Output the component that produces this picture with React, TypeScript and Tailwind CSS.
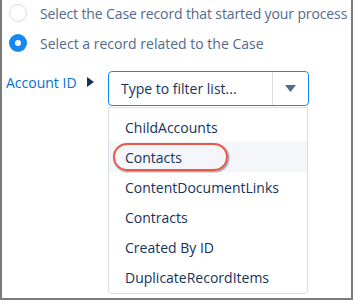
import React from 'react';

const items = ['ChildAccounts', 'Contacts', 'ContentDocumentLinks', 'Contracts', 'Created By ID', 'DuplicateRecordItems'];

const App: React.FC = () => {
  return (
    <div
      className="w-[353px] h-[300px] bg-white border-x-2 border-b-2 border-[#7b7b7b] overflow-hidden"
      style={{ fontFamily: '"Open Sans", "Noto Sans", sans-serif' }}
    >
      <div className="flex items-center h-[26px] pl-[7px] text-[14px] text-[#54698d] whitespace-nowrap">
        <span className="shrink-0 w-[18px] h-[18px] rounded-full border border-[#d8dde6] bg-white" />
        <span className="ml-[13px] tracking-[-0.12px]">Select the Case record that started your process</span>
      </div>
      <div className="flex items-center h-[34px] pl-[7px] text-[14px] text-[#54698d] whitespace-nowrap">
        <span className="shrink-0 w-[18px] h-[18px] rounded-full bg-[#1589ee] flex items-center justify-center">
          <span className="w-[6px] h-[6px] rounded-full bg-white" />
        </span>
        <span className="ml-[13px]">Select a record related to the Case</span>
      </div>
      <div className="flex items-start pt-[11px]">
        <div className="flex items-center h-[22px] pl-[4px] w-[106px] text-[14px] text-[#0070d2]">
          <span>Account ID</span>
          <svg width="7" height="10" viewBox="0 0 7 10" className="ml-[10px]">
            <path d="M0 0 L7 5 L0 10 Z" fill="#16325c" />
          </svg>
        </div>
        <div className="flex flex-col w-[201px]">
          <div className="flex items-center h-[35px] border border-[#1589ee] rounded-[4px] text-[14px] text-[#16325c]">
            <span className="flex-1 pl-[12px]">Type to filter list...</span>
            <div className="w-px h-full bg-[#d8dde6]" />
            <div className="w-[35px] flex items-center justify-center">
              <svg width="11" height="7" viewBox="0 0 11 7">
                <path d="M0 0 L11 0 L5.5 7 Z" fill="#54698d" />
              </svg>
            </div>
          </div>
          <div className="mt-[1px] w-[200px] border border-[#d8dde6] rounded-b-[4px] pt-[4px] pb-[1px] text-[14px] text-[#16325c]">
            {items.map((item) => (
              <div
                key={item}
                className={
                  item === 'Contacts'
                    ? 'relative h-[30px] flex items-center pl-[16px] bg-[#f4f6f9]'
                    : 'h-[30px] flex items-center pl-[16px]'
                }
              >
                <span>{item}</span>
                {item === 'Contacts' && (
                  <span className="absolute left-[4px] top-[1px] w-[115px] h-[28px] rounded-full border-2 border-[#e8584b] shadow-[1px_1px_2px_rgba(0,0,0,0.45)]" />
                )}
              </div>
            ))}
          </div>
        </div>
      </div>
    </div>
  );
};

export default App;
